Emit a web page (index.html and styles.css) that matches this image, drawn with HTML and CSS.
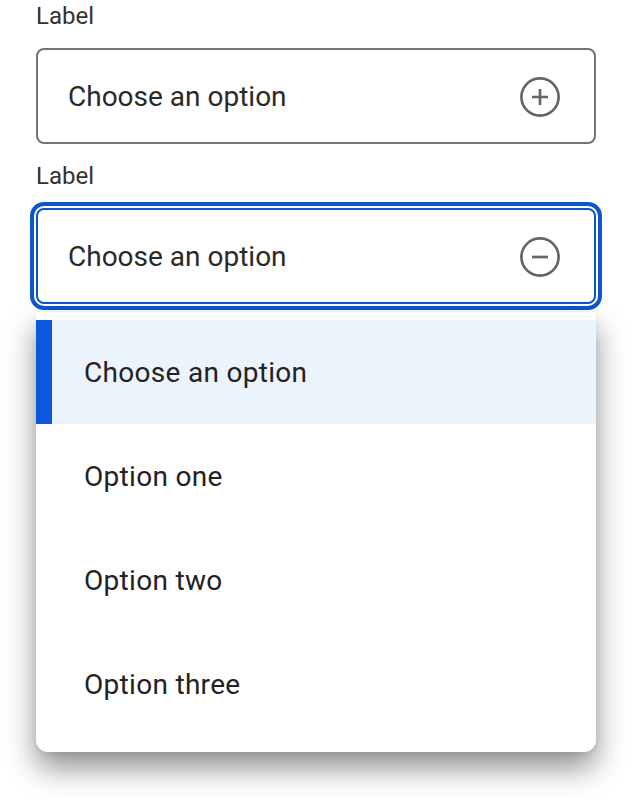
FILE: index.html
```html
<!DOCTYPE html>
<html lang="en">
<head>
<meta charset="utf-8">
<title>Select</title>
<link rel="stylesheet" href="styles.css">
</head>
<body>
<div class="page">
  <div class="field">
    <div class="label">Label</div>
    <div class="select">
      <span class="value">Choose an option</span>
      <svg class="icon" viewBox="0 0 24 24" width="48" height="48" aria-hidden="true">
        <circle cx="12" cy="12" r="9.3" fill="none" stroke="#666" stroke-width="1.35"/>
        <path d="M12 8v8M8 12h8" stroke="#666" stroke-width="1.35" fill="none"/>
      </svg>
    </div>
  </div>
  <div class="field">
    <div class="label">Label</div>
    <div class="select focused">
      <span class="value">Choose an option</span>
      <svg class="icon" viewBox="0 0 24 24" width="48" height="48" aria-hidden="true">
        <circle cx="12" cy="12" r="9.3" fill="none" stroke="#666" stroke-width="1.35"/>
        <path d="M8 12h8" stroke="#666" stroke-width="1.35" fill="none"/>
      </svg>
    </div>
    <ul class="menu">
      <li class="item selected">Choose an option</li>
      <li class="item">Option one</li>
      <li class="item">Option two</li>
      <li class="item">Option three</li>
    </ul>
  </div>
</div>
</body>
</html>
```
FILE: styles.css
```css
html, body {
  margin: 0;
  padding: 0;
  background: #ffffff;
}
body {
  font-family: Roboto, "Noto Sans", Arial, sans-serif;
  color: #1f1f1f;
}
.page {
  padding: 0 36px 60px 36px;
  display: flex;
  flex-direction: column;
  gap: 16px;
}
.field {
  display: flex;
  flex-direction: column;
  position: relative;
}
.label {
  font-size: 24px;
  line-height: 32px;
  color: #333333;
  margin-bottom: 16px;
}
.select {
  box-sizing: border-box;
  height: 96px;
  border: 2px solid #747474;
  border-radius: 8px;
  display: flex;
  align-items: center;
  justify-content: space-between;
  padding: 2px 30px 0 30px;
  background: #fff;
}
.select.focused {
  border-color: #0b57d0;
  box-shadow: 0 0 0 2px #ffffff, 0 0 0 6px #0b57d0;
}
.value {
  font-size: 28px;
  line-height: 36px;
  color: #2a2a2a;
}
.icon {
  display: block;
  flex: none;
}
.menu {
  list-style: none;
  margin: 8px 0 0 0;
  padding: 8px 0 16px 0;
  background: #ffffff;
  border-radius: 0 0 12px 12px;
  box-shadow: 0 16px 30px rgba(0, 0, 0, 0.44), 0 2px 6px rgba(0, 0, 0, 0.06);
  position: relative;
  z-index: 2;
}
.item {
  box-sizing: border-box;
  height: 104px;
  display: flex;
  align-items: center;
  padding-left: 48px;
  font-size: 28px;
  letter-spacing: 0.3px;
  color: #222222;
}
.item.selected {
  background: #ebf3fd;
  box-shadow: inset 16px 0 0 #0b57e0;
}
```
